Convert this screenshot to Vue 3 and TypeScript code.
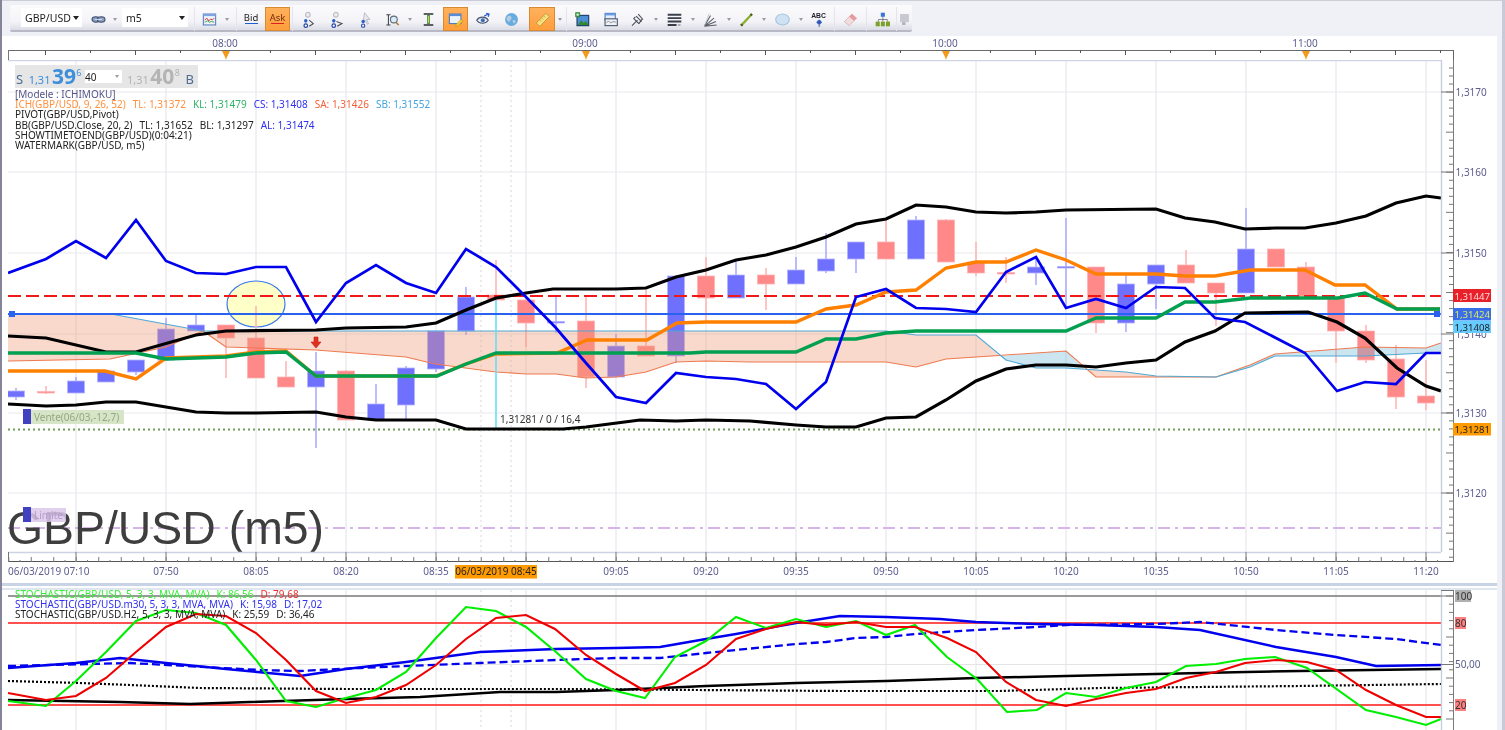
<script setup lang="ts">
interface Tool { w: number; kind: 'icon' | 'arrow' | 'sep' | 'gap'; i?: string; on?: boolean }

const T = (w: number, i: string, on = false): Tool => ({ w, kind: 'icon', i, on })
const A = (w: number): Tool => ({ w, kind: 'arrow' })
const S = (w: number): Tool => ({ w, kind: 'sep' })

const toolsA: Tool[] = [T(20, 'chain'), A(14)]
const toolsB: Tool[] = [S(12), T(18, 'chart'), A(18), S(1)]
const toolsC: Tool[] = [
  S(4), T(28, 'zoomA'), T(28, 'zoomB'), T(28, 'cursor'), T(28, 'zoomC'), A(8), T(28, 'beam'),
  { w: 1, kind: 'gap' }, T(25, 'note', true), T(30, 'eye'), T(26, 'globe'), { w: 5, kind: 'gap' },
  T(26, 'ruler', true), A(10), S(2), T(30, 'picture'), T(26, 'window'), T(28, 'fork'), A(9),
  T(28, 'lines'), A(9), T(27, 'fan'), A(9), T(26, 'pen'), A(10), T(27, 'oval'), A(9),
  T(26, 'abc'), S(7), T(24, 'eraser'), S(8), T(24, 'tree'), S(4), T(14, 'grey')
]

const icons: Record<string, string> = {
  chain: '<ellipse cx="7" cy="11" rx="5.5" ry="4" fill="#8ea0bc" stroke="#3a4c72" stroke-width="1.6"/><ellipse cx="15" cy="11" rx="5.5" ry="4" fill="#8ea0bc" stroke="#3a4c72" stroke-width="1.6"/><path d="M6 11h10" stroke="#dfe6f2" stroke-width="1.2"/>',
  chart: '<rect x="2" y="3" width="18" height="16" fill="#eef3fb" stroke="#5a7fc0" stroke-width="1.6"/><rect x="2" y="3" width="18" height="3" fill="#7fa5e0"/><path d="M4 12l3-3 3 4 3-3 2 2 3-3" fill="none" stroke="#d03030" stroke-width="1.4"/><path d="M4 15l4-2 3 2 3-1 4 1" fill="none" stroke="#30a040" stroke-width="1.3"/>',
  zoomA: '<circle cx="10" cy="4" r="3.4" fill="#eee" stroke="#c0c0c8" stroke-width="1.8"/><circle cx="7" cy="13" r="2.6" fill="#2f5fc8"/><circle cx="7" cy="20" r="2.6" fill="#fff" stroke="#2444a8" stroke-width="1.8"/><path d="M12 12l6 5-6 4" fill="none" stroke="#4a4e58" stroke-width="1.6"/>',
  zoomB: '<circle cx="10" cy="4" r="3.4" fill="#eee" stroke="#c0c0c8" stroke-width="1.8"/><circle cx="7" cy="13" r="2.6" fill="#2f5fc8"/><circle cx="7" cy="20" r="2.6" fill="#fff" stroke="#2444a8" stroke-width="1.8"/><path d="M11 14l8 3-7 4" fill="none" stroke="#4a4e58" stroke-width="1.6"/>',
  cursor: '<path d="M11 1l8 10-5 0 3 6-2 1-3-6-3 3z" fill="#e8e8ee" stroke="#a8a8b2"/><circle cx="9" cy="14" r="2.6" fill="#2f5fc8"/><circle cx="9" cy="20" r="2.4" fill="#fff" stroke="#2444a8" stroke-width="1.6"/>',
  zoomC: '<path d="M2 4h6M5 4v15M2 19h6" stroke="#3a3e46" stroke-width="1.5" fill="none"/><circle cx="13" cy="11" r="5" fill="#dcebf8" stroke="#5d6a78" stroke-width="1.6"/><path d="M16 15l4 4" stroke="#a87830" stroke-width="2.2"/>',
  beam: '<path d="M4 3h14M4 19h14" stroke="#2a2e34" stroke-width="2"/><path d="M11 4v14" stroke="#4a8a40" stroke-width="4"/><path d="M11 6v10" stroke="#c8d850" stroke-width="1.5"/>',
  note: '<rect x="2" y="3" width="17" height="14" fill="#eaf2fc" stroke="#4a78c4" stroke-width="1.6"/><rect x="2" y="3" width="17" height="3" fill="#5a8cdc"/><path d="M12 18l7-7 3 2-7 7-4 1z" fill="#f6d030" stroke="#b88a18" stroke-width=".8"/>',
  eye: '<path d="M1 12c4-6 13-6 17 0-4 6-13 6-17 0z" fill="#e8eef6" stroke="#4a5870" stroke-width="1.6"/><circle cx="10" cy="12" r="3" fill="#3f6cb8"/><path d="M12 6l6-3M15 2l4 1-1 4" stroke="#2f5fc8" stroke-width="1.9" fill="none"/>',
  globe: '<circle cx="11" cy="11" r="9.5" fill="#68acdf"/><path d="M6 6c3-1 5 0 5 3s-3 2-3 5-3-1-4-3 0-4 2-5zM13 12c2-1 4 0 4 2s-2 3-3 2-2-3-1-4z" fill="#b4cde2"/>',
  ruler: '<path d="M2 16L16 2l5 5L7 21z" fill="#f8e080" stroke="#a88a28"/><path d="M7 12l2 2M10 9l2 2M13 6l2 2" stroke="#a88a28"/>',
  picture: '<rect x="3" y="5" width="17" height="15" fill="#4a8fd8" stroke="#24446f" stroke-width="1.8"/><path d="M4 19l5-7 4 4 3-3 4 6z" fill="#2f8a2f"/><rect x="1" y="1" width="6" height="6" fill="#50b050" stroke="#2a7a2a"/><path d="M4 2v4M2 4h4" stroke="#fff"/>',
  window: '<rect x="3" y="2" width="15" height="10" fill="#e6eefa" stroke="#4a78c4" stroke-width="1.6"/><rect x="3" y="2" width="15" height="3" fill="#6a9ae0"/><rect x="3" y="10" width="18" height="10" fill="#eef2f7" stroke="#4a5468" stroke-width="1.6"/><path d="M5 16l3-3 3 3 4-2 4 1" fill="none" stroke="#666"/>',
  fork: '<path d="M3 20l8-8M6 10l7 7M9 6l8 8M12 3l7 8M8 7l-3 3M18 10l-5 7" stroke="#4a4f58" stroke-width="1.6" fill="none"/>',
  lines: '<path d="M1 4h20M1 9h20M1 14h20M1 19h13" stroke="#3a3f4a" stroke-width="2.8"/><path d="M16 19h4" stroke="#90959e" stroke-width="2"/>',
  fan: '<path d="M2 21L11 5M2 21L16 9M2 21L19 14M2 21L20 19" stroke="#5a5f68" stroke-width="1.6" fill="none"/><path d="M2 21L9 2" stroke="#b8bcc2" stroke-width="1"/>',
  pen: '<path d="M3 20L19 3" stroke="#8ab030" stroke-width="3.4"/><path d="M3 20l2-2M17 5l2-2" stroke="#4a5a28" stroke-width="3.4"/>',
  oval: '<ellipse cx="11" cy="11" rx="10" ry="8" fill="#cfe2f3" stroke="#a3c4de" stroke-width="1.6"/>',
  abc: '<text x="11" y="9" text-anchor="middle" font-family="Liberation Sans, sans-serif" font-weight="700" font-size="10" fill="#20242c">ABC</text><circle cx="12" cy="15" r="3.4" fill="#4070d0"/><path d="M12 11v11M8 15h8" stroke="#2a4ca0" stroke-width="1.2"/>',
  eraser: '<path d="M2 14L13 3l7 6L9 20z" fill="#f2dcdc" stroke="#c8aaae"/><path d="M13 3l7 6-4 4-7-6z" fill="#ea98a0"/>',
  tree: '<rect x="8.5" y="1" width="6" height="6" fill="#3a78d0"/><path d="M11.5 7v4M5 14v-3h13v3M11.5 11v3" stroke="#556" fill="none"/><rect x="1" y="14" width="6" height="7" fill="#7da02c"/><rect x="8.5" y="14" width="6" height="7" fill="#7da02c"/><rect x="16" y="14" width="6" height="7" fill="#7da02c"/>',
  grey: '<rect x="3" y="3" width="13" height="12" fill="#c8c8d0"/><rect x="6" y="15" width="5" height="4" fill="#b0b0ba"/>'
}

const verticals = Array.from({ length: 16 }, (_, i) => 76 + 90 * i)
const priceGrid = [92, 172, 253, 334, 413, 493]
const priceLabels = ['1,3170', '1,3160', '1,3150', '1,3140', '1,3130', '1,3120']

const up = 'u'
const raw: [number, number, number, number, string][] = [
  [391, 397, 388, 400, up], [391.5, 393, 386, 394, 'd'], [381, 393, 377, 393, up], [371, 382, 371, 382, up],
  [360, 372, 360, 375, up], [329, 360, 318, 360, up], [325, 331, 315, 331, up], [325, 338, 325, 378, 'd'],
  [338, 378, 306, 378, 'd'], [377, 387, 361, 387, 'd'], [371, 387, 352, 448, up], [371, 420, 370, 420, 'd'],
  [404, 420, 384, 420, up], [368, 405, 366, 420, up], [331, 369, 331, 372, up], [297, 331, 287, 335, up],
  [295, 300, 260, 300, 'd'], [300, 323, 295, 347, 'd'], [321.5, 323, 297, 333, up], [321, 377, 295, 388, 'd'],
  [346, 377, 334, 377, up], [346, 356, 290, 356, 'd'], [276, 356, 276, 363, up], [276, 298, 257, 322, 'd'],
  [275, 298, 260, 298, up], [275, 284, 268, 310, 'd'], [270, 284, 257, 284, up], [259, 271, 233, 273, up],
  [242, 259, 242, 273, up], [242, 259, 220, 259, 'd'], [220, 259, 216, 259, up], [220, 262, 219, 262, 'd'],
  [262, 273, 242, 276, 'd'], [272.5, 274, 257, 283, 'd'], [267, 273, 259, 285, up], [266.5, 268, 218, 307, up],
  [267, 323, 267, 333, 'd'], [284, 323, 275, 332, up], [265, 284, 265, 309, up], [265, 283, 250, 283, 'd'],
  [283, 293, 283, 326, 'd'], [249, 293, 208, 293, up], [249, 267, 249, 267, 'd'], [267, 296, 262, 296, 'd'],
  [298, 331, 298, 363, 'd'], [331, 360, 325, 363, 'd'], [359, 397, 345, 409, 'd'], [396, 403, 360, 410, 'd']
]
const candles = raw.map((c, i) => ({
  x: 16 + 30 * i, top: c[0], h: c[1] - c[0], wt: c[2], wb: c[3], up: c[4] === up
}))

const axisMinor = Array.from({ length: 62 }, (_, i) => 68 + i * 8.02)
const topTicks = Array.from({ length: 32 }, (_, i) => 45 * (i + 1))
const topMarks = [226, 586, 946, 1306]
const botTicks: { x: number; y: number }[] = []
for (let x = 8; x < 1441; x += 11.25) {
  const k = Math.round((x - 8) / 11.25) % 8
  botTicks.push({ x: x + 0.75, y: k % 2 === 0 ? 557 : 560 })
}
const botLabels: [number, string][] = [
  [166, '07:50'], [256, '08:05'], [346, '08:20'], [436, '08:35'], [616, '09:05'], [706, '09:20'], [796, '09:35'],
  [886, '09:50'], [976, '10:05'], [1066, '10:20'], [1156, '10:35'], [1246, '10:50'], [1336, '11:05'], [1426, '11:20']
]
const subTicks = Array.from({ length: 16 }, (_, i) => 596 + i * 8.2)

const cloudA = '8,314 111,314 203,331 886,331 916,335 976,335 1000,356 946,359 916,367 886,362 750,362 706,361 676,362 646,372 616,377 586,378 556,374 526,374 496,372 435,364 406,357 316,350 226,347 203,331 166,347 110,359 8,361'
const cloudB = '1000,356 1036,353 1066,351 1085,369 1066,368 1036,368 1006,360'
const cloudC = '1085,369 1096,377 1156,377 1216,377 1156,376 1126,372 1096,370'
const cloudD = '1216,377 1250,365 1275,354 1365,347 1426,348 1441,343 1441,353 1426,353 1365,356 1275,356 1250,367'
const sbLine = '8,314 111,314 203,331 886,331 916,335 976,335 1006,360 1036,368 1066,368 1126,372 1156,376 1216,377 1250,367 1275,356 1365,356 1426,353 1441,353'
const saLine = '8,361 110,359 166,347 203,331 226,347 316,350 406,357 435,364 496,372 526,374 556,374 586,378 616,377 646,372 676,362 706,361 750,362 886,362 916,367 946,359 976,357 1036,353 1066,351 1096,377 1171,377 1216,377 1250,365 1275,354 1365,347 1426,348 1441,343'

const bbUp = '8,336 46,338 106,352 136,352 196,335 226,331 316,330 346,328 406,327 436,323 466,310 496,298 526,293 553,289 616,289 646,288 676,277 706,270 736,260 766,255 796,247 826,237 856,224 886,219 916,205 946,207 976,212 1006,213 1036,212 1066,210 1156,209 1185,218 1215,222 1245,229 1276,228 1305,228 1336,223 1366,216 1396,203 1426,196 1441,198'
const bbLow = '8,404 46,406 76,405 106,402 136,402 166,407 196,412 226,413 256,413 316,412 346,417 376,420 436,420 466,429 563,429 586,427 640,420 676,421 706,420 750,421 796,425 826,427 856,427 886,418 916,417 946,400 976,381 1006,369 1036,365 1066,365 1096,367 1126,363 1156,360 1185,342 1215,331 1245,313 1308,312 1337,322 1365,338 1397,368 1426,386 1441,391'
const al = '8,273 46,259 76,241 106,258 136,220 166,261 196,273 226,274 256,267 286,267 316,322 346,283 376,265 406,283 436,293 466,249 496,267 526,297 556,328 586,363 616,397 646,403 676,373 706,377 736,379 766,384 796,409 826,382 856,297 886,289 916,308 946,309 976,312 1006,272 1036,257 1066,308 1096,299 1126,308 1156,287 1185,288 1215,318 1245,322 1305,353 1337,391 1365,382 1396,384 1426,353 1441,353'
const tl = '8,371 105,371 136,379 166,358 196,357 226,356 256,352 286,351 316,376 436,376 466,364 496,354 557,353 587,340 647,340 677,323 706,322 796,322 826,309 856,305 886,292 916,290 946,268 976,262 1006,262 1036,250 1066,260 1096,274 1156,274 1185,276 1215,276 1250,270 1305,270 1335,285 1365,285 1397,309 1440,309'
const kl = '8,353 136,353 166,359 226,357 256,353 286,352 316,376 437,376 466,364 496,353 690,353 706,352 796,352 826,339 856,339 886,333 916,331 1066,331 1096,318 1156,318 1185,302 1215,302 1250,298 1338,298 1365,293 1397,309 1440,309'

const stoGreen = '8,701 46,706 76,681 106,652 136,621 166,610 196,613 226,625 256,660 286,701 316,707 346,698 376,690 406,672 436,638 466,607 496,611 526,627 556,652 586,679 616,691 645,698 675,657 706,641 736,617 766,628 796,619 826,627 856,621 886,635 915,625 947,657 977,679 1007,712 1037,710 1066,693 1096,697 1126,688 1156,682 1186,666 1216,664 1245,659 1275,657 1307,668 1366,710 1396,717 1426,725 1441,719'
const stoRed = '8,693 46,700 76,696 106,678 136,652 166,627 196,614 226,616 256,633 286,660 316,691 346,703 376,697 406,685 436,665 466,639 496,618 526,615 555,629 586,655 616,674 645,691 675,683 706,665 736,639 766,629 796,622 826,625 856,622 886,627 915,627 947,638 976,652 1006,682 1036,700 1066,706 1096,699 1126,693 1156,689 1186,678 1216,672 1245,663 1276,660 1307,662 1336,670 1366,690 1396,705 1426,717 1441,717'
const stoBlue = '8,668 76,663 120,658 166,663 226,669 300,676 346,669 406,662 480,652 556,649 616,648 660,647 706,639 736,634 796,623 840,616 886,617 940,619 976,622 1036,624 1096,625 1156,627 1200,630 1276,647 1336,657 1376,666 1441,665'
const stoBlueD = '8,666 130,663 260,670 300,671 360,668 480,663 556,660 616,658 660,658 706,653 736,650 796,644 826,642 856,638 886,637 916,634 976,630 1036,627 1066,625 1156,624 1200,622 1276,630 1336,635 1396,639 1441,645'
const stoBlack = '8,700 120,702 190,704 250,702 346,699 420,697 500,692 556,692 616,690 706,686 796,683 886,681 976,678 1066,676 1156,674 1246,672 1300,671 1441,669'
const stoDots = '8,681 80,683 130,685 200,688 346,689 556,689 840,691 1000,691 1100,688 1300,686 1441,684'
</script>

<template>
  <div class="page">
    <div class="strip">
      <div class="toolbar">
        <div class="combo sym"><span>GBP/USD</span><i class="caret"></i></div>
        <template v-for="(t, n) in toolsA" :key="'a' + n">
          <div class="cell" :style="{ width: t.w + 'px' }">
            <svg v-if="t.kind === 'icon'" class="ico" viewBox="0 0 22 22" v-html="icons[t.i as string]"></svg>
            <i v-else-if="t.kind === 'arrow'" class="mini"></i>
          </div>
        </template>
        <div class="combo per"><span>m5</span><i class="caret"></i></div>
        <template v-for="(t, n) in toolsB" :key="'b' + n">
          <div class="cell" :style="{ width: t.w + 'px' }">
            <svg v-if="t.kind === 'icon'" class="ico" viewBox="0 0 22 22" v-html="icons[t.i as string]"></svg>
            <i v-else-if="t.kind === 'arrow'" class="mini"></i>
            <i v-else-if="t.kind === 'sep'" class="rule"></i>
          </div>
        </template>
        <div class="price bid">Bid</div>
        <div class="price ask">Ask</div>
        <template v-for="(t, n) in toolsC" :key="'c' + n">
          <div class="cell" :class="{ on: t.on }" :style="{ width: t.w + 'px' }">
            <svg v-if="t.kind === 'icon'" class="ico" viewBox="0 0 22 22" v-html="icons[t.i as string]"></svg>
            <i v-else-if="t.kind === 'arrow'" class="mini"></i>
            <i v-else-if="t.kind === 'sep'" class="rule"></i>
          </div>
        </template>
      </div>
    </div>

    <div class="board">
      <svg class="plot top" width="1495" height="24" viewBox="2 36 1495 24">
        <line x1="8" y1="50.5" x2="1453" y2="50.5" stroke="#6a6a6a" />
        <line v-for="(x, i) in topTicks" :key="x" :x1="x + 0.5" y1="50" :x2="x + 0.5" :y2="i % 2 === 0 ? 55 : 53" stroke="#555" />
        <line x1="8.5" y1="50" x2="8.5" y2="60" stroke="#777" />
        <text v-for="(x, i) in topMarks" :key="x" :x="x - 1" y="47" class="lbl" text-anchor="middle">{{ ['08:00', '09:00', '10:00', '11:00'][i] }}</text>
        <path v-for="x in topMarks" :key="'m' + x" :d="`M${x - 4} 51h8l-3 6-1 3-1-3z`" fill="#f59a1e" />
        <line x1="1453.5" y1="50" x2="1453.5" y2="60" stroke="#666" />
      </svg>

      <div class="mainwrap">
        <svg class="plot" width="1495" height="502" viewBox="2 60 1495 502">
          <defs>
            <clipPath id="mainclip"><rect x="8" y="60" width="1433" height="492" /></clipPath>
          </defs>
          <g clip-path="url(#mainclip)">
            <line v-for="x in verticals" :key="x" :x1="x" y1="60" :x2="x" y2="552" stroke="#ececf0" stroke-width="1.5" />
            <line v-for="y in priceGrid" :key="y" x1="8" :y1="y" x2="1441" :y2="y" stroke="#e9e9ed" stroke-width="1.2" />
            <line x1="481" y1="60" x2="481" y2="552" stroke="#d8d8dc" stroke-dasharray="2 3" />
            <line x1="511" y1="60" x2="511" y2="552" stroke="#d8d8dc" stroke-dasharray="2 3" />
            <ellipse cx="256" cy="304" rx="29" ry="23" fill="#ffffc8" stroke="#3a7ae8" stroke-width="1.2" />
            <g v-for="c in candles" :key="c.x">
              <line :x1="c.x" :y1="c.wt" :x2="c.x" :y2="c.wb" :stroke="c.up ? '#a9a9ff' : '#ffb0b0'" stroke-width="1.5" />
              <rect :x="c.x - 8.5" :y="c.top" width="17" :height="c.h" :fill="c.up ? '#7070ff' : '#ff8888'" :stroke="c.up ? '#b4b4ff' : '#ffb4b4'" stroke-width=".8" />
            </g>
            <polygon :points="cloudA" fill="#eb9673" fill-opacity=".36" />
            <polygon :points="cloudB" fill="#6fb7d8" fill-opacity=".36" />
            <polygon :points="cloudC" fill="#eb9673" fill-opacity=".36" />
            <polygon :points="cloudD" fill="#6fb7d8" fill-opacity=".36" />
            <polyline :points="saLine" fill="none" stroke="#ee7a50" stroke-width="1.1" />
            <polyline :points="sbLine" fill="none" stroke="#4ea8d4" stroke-width="1.1" />
            <line x1="496" y1="296" x2="496" y2="429" stroke="#5fdcf8" stroke-width="1.5" />
            <line x1="8" y1="296" x2="1441" y2="296" stroke="#f01818" stroke-width="1.8" stroke-dasharray="13 5" />
            <line x1="8" y1="314" x2="1441" y2="314" stroke="#2a62f0" stroke-width="2.2" />
            <line x1="8" y1="429.5" x2="1441" y2="429.5" stroke="#6f9a58" stroke-width="2" stroke-dasharray="2 3" />
            <line x1="8" y1="528" x2="1441" y2="528" stroke="#d7b5ea" stroke-width="2" stroke-dasharray="12 5 3 5" />
            <polyline :points="bbUp" fill="none" stroke="#000" stroke-width="3.2" />
            <polyline :points="bbLow" fill="none" stroke="#000" stroke-width="3.2" />
            <polyline :points="tl" fill="none" stroke="#ff8000" stroke-width="3.4" />
            <polyline :points="kl" fill="none" stroke="#00a050" stroke-width="3.4" />
            <polyline :points="al" fill="none" stroke="#0000ee" stroke-width="2.7" />
            <path d="M314 337h4v5h3l-5 6-5-6h3z" fill="#e03020" stroke="#c02010" stroke-width=".6" />
            <rect x="9" y="311" width="6" height="6" fill="#2a62f0" />
            <rect x="1434" y="311" width="6" height="6" fill="#2a62f0" />
            <text x="500" y="423" class="lbl dark">1,31281 / 0 / 16,4</text>
            <text x="7" y="544" class="mark">GBP/USD (m5)</text>
            <rect x="23" y="409" width="8" height="15" fill="#4040c0" />
            <rect x="31" y="410" width="93" height="14" fill="#d6e4c8" />
            <text x="34" y="420.5" class="lbl vente">Vente(06/03,-12,7)</text>
            <rect x="31" y="508" width="35" height="14" fill="#dcc8ea" fill-opacity=".85" />
            <rect x="23" y="507" width="8" height="15" fill="#4040c0" />
            <text x="34" y="518.5" class="lbl limite">Limite</text>
          </g>
          <line x1="8" y1="60.5" x2="1441" y2="60.5" stroke="#cdd5e4" stroke-width="1.4" />
          <line x1="1441.5" y1="60" x2="1441.5" y2="552" stroke="#c6cedd" stroke-width="1.4" />
          <line x1="1453.5" y1="60" x2="1453.5" y2="562" stroke="#7a7a7a" />
          <line v-for="(y, i) in axisMinor" :key="y" :x1="i % 5 === 3 ? 1446 : 1449" :y1="y" x2="1453" :y2="y" stroke="#777" />
          <line v-for="y in priceGrid" :key="'t' + y" x1="1441" :y1="y" x2="1453" :y2="y" stroke="#777" />
          <text v-for="(y, i) in priceGrid" :key="'l' + y" x="1455.5" :y="y + 3.5" class="lbl">{{ priceLabels[i] }}</text>
          <rect x="1453" y="289" width="38" height="13" fill="#e8202a" />
          <text x="1454.5" y="299.5" class="lbl tag tagr">1,31447</text>
          <rect x="1453" y="308" width="38" height="12.5" fill="#3a6ee8" />
          <text x="1454.5" y="318" class="lbl tag tagy">1,31424</text>
          <rect x="1453" y="320.5" width="38" height="12.5" fill="#66ccff" />
          <text x="1454.5" y="330.5" class="lbl tag tagd">1,31408</text>
          <rect x="1453" y="423" width="38" height="12.5" fill="#ff9a00" />
          <text x="1454.5" y="433" class="lbl tag tagd">1,31281</text>

          <line x1="8" y1="552.5" x2="1441" y2="552.5" stroke="#ccd4e4" stroke-width="1.4" />
          <line x1="8" y1="561.5" x2="1453" y2="561.5" stroke="#555" />
          <line x1="8.5" y1="552" x2="8.5" y2="562" stroke="#777" />
          <line v-for="t in botTicks" :key="t.x" :x1="t.x" :y1="t.y" :x2="t.x" y2="562" stroke="#777" />
          <line v-for="x in verticals" :key="'v' + x" :x1="x" y1="552" :x2="x" y2="562" stroke="#888" stroke-width="1.2" />
        </svg>
        <div class="quote">
          <span class="q-s">S</span>
          <span class="q-a">1,31</span>
          <b class="q-b">39</b>
          <sup class="q-c">6</sup>
          <div class="q-in"><span>40</span><i class="mini"></i></div>
          <span class="q-a grey">1,31</span>
          <b class="q-b grey">40</b>
          <sup class="q-c grey">8</sup>
          <span class="q-s bb">B</span>
        </div>
        <div class="legend">
          <div class="model">[Modele : ICHIMOKU]</div>
          <div><span class="or">ICH(GBP/USD, 9, 26, 52)</span><span class="or m">TL: 1,31372</span><span class="gr m">KL: 1,31479</span><span class="bl m">CS: 1,31408</span><span class="rd m">SA: 1,31426</span><span class="sk m">SB: 1,31552</span></div>
          <div>PIVOT(GBP/USD,Pivot)</div>
          <div>BB(GBP/USD.Close, 20, 2)<span class="m">TL: 1,31652</span><span class="m">BL: 1,31297</span><span class="bl m">AL: 1,31474</span></div>
          <div>SHOWTIMETOEND(GBP/USD)(0:04:21)</div>
          <div>WATERMARK(GBP/USD, m5)</div>
        </div>
      </div>

      <svg class="plot" width="1495" height="21" viewBox="2 562 1495 21">
        <text x="8" y="575" class="lbl">06/03/2019 07:10</text>
        <text v-for="l in botLabels" :key="l[1]" :x="l[0]" y="575" class="lbl" text-anchor="middle">{{ l[1] }}</text>
        <rect x="455" y="565" width="82" height="13.5" fill="#ff9a00" />
        <text x="496" y="575" class="lbl tagd" text-anchor="middle">06/03/2019 08:45</text>
      </svg>
      <div class="split"></div>

      <div class="subwrap">
        <svg class="plot" width="1495" height="142" viewBox="2 588 1495 142">
          <rect x="2" y="588" width="1495" height="2" fill="#dfe6f0" />
          <line v-for="x in verticals" :key="x" :x1="x" y1="590" :x2="x" y2="730" stroke="#ececf0" stroke-width="1.5" />
          <line x1="8" y1="664.5" x2="1441" y2="664.5" stroke="#e4e4e8" stroke-width="1.2" />
          <line x1="481" y1="590" x2="481" y2="730" stroke="#d8d8dc" stroke-dasharray="2 3" />
          <line x1="511" y1="590" x2="511" y2="730" stroke="#d8d8dc" stroke-dasharray="2 3" />
          <line x1="8" y1="596" x2="1441" y2="596" stroke="#777" stroke-width="1.4" />
          <line x1="8" y1="623" x2="1441" y2="623" stroke="#ff5050" stroke-width="2" />
          <line x1="8" y1="705" x2="1441" y2="705" stroke="#ff5050" stroke-width="2" />
          <polyline :points="stoDots" fill="none" stroke="#000" stroke-width="2.2" stroke-dasharray="2 2" />
          <polyline :points="stoBlack" fill="none" stroke="#000" stroke-width="2.5" />
          <polyline :points="stoBlueD" fill="none" stroke="#0000ee" stroke-width="2.3" stroke-dasharray="8 4" />
          <polyline :points="stoBlue" fill="none" stroke="#0000ee" stroke-width="2.4" />
          <polyline :points="stoGreen" fill="none" stroke="#00ee00" stroke-width="2.1" />
          <polyline :points="stoRed" fill="none" stroke="#ee0000" stroke-width="2.1" />
          <line x1="1441.5" y1="590" x2="1441.5" y2="730" stroke="#c6cedd" stroke-width="1.4" />
          <line x1="1453.5" y1="590" x2="1453.5" y2="730" stroke="#7a7a7a" />
          <line x1="1441" y1="590.5" x2="1453" y2="590.5" stroke="#777" />
          <line v-for="(y, i) in subTicks" :key="y" :x1="i % 5 === 0 ? 1446 : 1449" :y1="y" x2="1453" :y2="y" stroke="#777" />
          <line x1="1441" y1="596" x2="1453" y2="596" stroke="#777" />
          <line x1="1441" y1="664.5" x2="1453" y2="664.5" stroke="#777" />
          <rect x="1455" y="590" width="16" height="12" fill="#b0b0b0" />
          <text x="1455" y="600" class="lbl dark">100</text>
          <rect x="1455" y="617" width="11" height="12" fill="#ff8080" />
          <text x="1455" y="627" class="lbl dark">80</text>
          <text x="1455" y="668" class="lbl">50,00</text>
          <rect x="1455" y="699" width="11" height="12" fill="#ff8080" />
          <text x="1455" y="709" class="lbl dark">20</text>
        </svg>
        <div class="sublegend">
          <div class="lime">STOCHASTIC(GBP/USD, 5, 3, 3, MVA, MVA)<span class="m">K: 86,56</span><span class="red m">D: 79,68</span></div>
          <div class="bl">STOCHASTIC(GBP/USD.m30, 5, 3, 3, MVA, MVA)<span class="m">K: 15,98</span><span class="m">D: 17,02</span></div>
          <div>STOCHASTIC(GBP/USD.H2, 5, 3, 3, MVA, MVA)<span class="m">K: 25,59</span><span class="m">D: 36,46</span></div>
        </div>
      </div>
    </div>
  </div>
</template>

<style>
html, body { margin: 0; padding: 0; overflow: hidden; background: #f0f0f7; }
</style>

<style scoped>
.page {
  width: 1505px;
  height: 730px;
  box-sizing: border-box;
  overflow: hidden;
  display: flex;
  flex-direction: column;
  background: #f0f0f7;
  font-family: "Noto Sans", "Liberation Sans", sans-serif;
  border-left: 2px solid #85859a;
  border-right: 3px solid #c8cad8;
  filter: blur(0.4px);
}
.strip {
  height: 36px;
  flex: none;
  box-sizing: border-box;
  padding: 4px 0 0 8px;
  border-top: 1px solid #cdcdd8;
}
.toolbar {
  width: 902px;
  height: 27px;
  box-sizing: border-box;
  padding-left: 11px;
  display: flex;
  align-items: center;
  background: linear-gradient(#fbfbfd, #f4f4f8 65%, #dcdce6);
  border-bottom: 2px solid #b9b9c6;
  border-radius: 2px;
}
.combo {
  height: 19px;
  box-sizing: border-box;
  padding: 0 3px 0 4px;
  display: flex;
  align-items: center;
  justify-content: space-between;
  background: #fff;
  font-size: 10.5px;
  color: #222;
  flex: none;
}
.sym { width: 61px; margin-right: 6px; }
.per { width: 66px; }
.caret {
  width: 0;
  height: 0;
  border: 3.5px solid transparent;
  border-top: 4px solid #222;
  border-bottom: 0;
}
.cell {
  height: 24px;
  margin-top: 3px;
  flex: none;
  display: flex;
  align-items: center;
  justify-content: center;
}
.cell.on, .ask {
  background: linear-gradient(#ffb25e, #ff9d3a);
  box-shadow: inset 0 0 0 1px #d98a30;
}
.ico { width: 15px; height: 15px; flex: none; overflow: visible; }
.mini {
  width: 0;
  height: 0;
  border: 2.5px solid transparent;
  border-top: 3px solid #9a9aa6;
  border-bottom: 0;
  display: block;
}
.rule { width: 1px; height: 24px; background: #e4e4ec; display: block; }
.price {
  height: 24px;
  margin-top: 3px;
  flex: none;
  box-sizing: border-box;
  padding-bottom: 4px;
  display: flex;
  align-items: center;
  justify-content: center;
  font-size: 9.5px;
  color: #222;
  position: relative;
}
.bid { width: 28px; }
.ask { width: 25px; color: #703010; }
.price::after {
  content: "";
  position: absolute;
  left: 50%;
  width: 13px;
  margin-left: -6.5px;
  bottom: 7px;
  height: 1.2px;
  background: #1a5fd0;
}
.ask::after { background: #e02020; }
.board {
  width: 1495px;
  flex: 1;
  background: #fff;
  display: flex;
  flex-direction: column;
  position: relative;
}
.plot { display: block; flex: none; }
.mainwrap, .subwrap { position: relative; flex: none; }
.lbl { font-size: 10px; fill: #5c5c90; font-family: "Noto Sans", "Liberation Sans", sans-serif; }
.tag { font-size: 9.6px; }
.tagr { fill: #ffd8d8; }
.dark { fill: #333; }
.vente { fill: #93a97f; }
.limite { fill: #b49ccb; }
.tagy { fill: #dcec60; }
.tagd { fill: #222; }
.mark { font-family: "Liberation Sans", sans-serif; font-size: 46.4px; fill: #3e3e3e; }
.split {
  height: 5px;
  flex: none;
  box-sizing: border-box;
  border-top: 3px solid #c8d4e6;
  background: #fff;
}
.quote {
  position: absolute;
  left: 13px;
  top: 5px;
  width: 183px;
  height: 23px;
  background: #e6e6e6;
  display: flex;
  align-items: baseline;
  box-sizing: border-box;
  padding: 0 0 0 1px;
  color: #3d8fdc;
}
.q-s { font-size: 13px; color: #4c6c92; width: 13px; line-height: 23px; }
.q-a { font-size: 11px; width: 24px; }
.q-b { font-size: 21px; width: 25px; line-height: 23px; }
.q-c { font-size: 9px; line-height: 1; width: 9px; align-self: flex-start; margin-top: 3px; }
.grey { color: #b4b4b4; }
.bb { margin-left: 2px; }
.q-in {
  width: 38px;
  height: 13px;
  align-self: center;
  background: #fff;
  font-size: 10px;
  color: #222;
  display: flex;
  align-items: center;
  justify-content: space-between;
  padding-right: 3px;
  box-sizing: border-box;
  margin-right: 5px;
}
.legend, .sublegend {
  position: absolute;
  font-size: 10px;
  line-height: 10.2px;
  color: #222;
  white-space: nowrap;
}
.legend { left: 13px; top: 29px; }
.sublegend { left: 13px; top: 1px; }
.model { color: #55558a; }
.m { margin-left: 7px; }
.or { color: #ff9040; }
.gr { color: #2fb568; }
.bl { color: #3030f0; }
.rd { color: #f4603a; }
.sk { color: #45a5e2; }
.lime { color: #36ee36; }
.red { color: #f03030; }
</style>
